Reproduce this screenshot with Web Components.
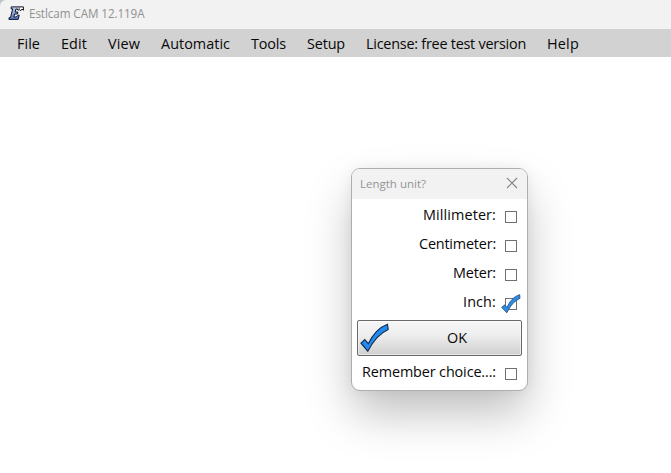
<!DOCTYPE html>
<html lang="en">
<head>
<meta charset="utf-8">
<title>Estlcam CAM</title>
<style>
html,body{margin:0;height:100%;overflow:hidden;background:#fff}
body{font-family:"Open Sans","Noto Sans",sans-serif;color:#111}
</style>
</head>
<body>
<cam-window>
  <cam-titlebar slot="title"><fit-text w="115.5">Estlcam CAM 12.119A</fit-text></cam-titlebar>
  <cam-menubar slot="menu">
    <fit-text w="23">File</fit-text><fit-text w="26">Edit</fit-text><fit-text w="32">View</fit-text><fit-text w="69">Automatic</fit-text><fit-text w="35">Tools</fit-text><fit-text w="38">Setup</fit-text><fit-text w="160">License: free test version</fit-text><fit-text w="32">Help</fit-text>
  </cam-menubar>
  <unit-dialog>
    <fit-text slot="title" w="66">Length unit?</fit-text>
    <option-row><fit-text w="73">Millimeter:</fit-text></option-row>
    <option-row><fit-text w="77">Centimeter:</fit-text></option-row>
    <option-row><fit-text w="43">Meter:</fit-text></option-row>
    <option-row checked><fit-text w="33">Inch:</fit-text></option-row>
    <ok-button><fit-text w="20">OK</fit-text></ok-button>
    <option-row><fit-text w="134">Remember choice...:</fit-text></option-row>
  </unit-dialog>
</cam-window>
<script>
function define(name, html, setup) {
  customElements.define(name, class extends HTMLElement {
    constructor() {
      super();
      this.attachShadow({mode: 'open'}).innerHTML = html;
    }
    connectedCallback() { if (setup) setup(this); }
  });
}

define('cam-window', `
<style>
:host{display:grid;grid-template-rows:29px 28px 1fr;height:100vh;background:linear-gradient(#b9c3c9,#b9c3c9) 0 0/8px 8px no-repeat #fff}
main{display:grid;justify-content:start;align-content:start;padding:111px 0 0 351px}
</style>
<slot name="title"></slot><slot name="menu"></slot><main><slot></slot></main>`);

define('cam-titlebar', `
<style>
:host{display:flex;align-items:center;gap:5px;padding:0 0 3px 8px;box-sizing:border-box;border-top-left-radius:6px;background:#f2f2f2;color:#919191;font-size:11.7px;line-height:16px}
svg{flex:none;display:block}
</style>
<svg width="16" height="16" viewBox="0 0 16 16">
<defs><linearGradient id="g" x2="0" y2="1"><stop offset="0" stop-color="#c4d4f4"/><stop offset="1" stop-color="#4f74c8"/></linearGradient></defs>
<path d="M3.2 1.9H11.6L11.4 5H9.7L9.3 4H7.9L7.1 7H9.9L9.5 9H6.6L5.8 12H8.3L10 10.2H11.2L10.2 14.4H.9L1.2 12.6H2.5L4.7 3.8H3Z" fill="url(#g)" stroke="#101626" stroke-width="1"/>
<path d="M11.3 1.9H15.4V5.2L14 4.2 12 6" fill="#fff" stroke="#111" stroke-width="1"/>
</svg><slot></slot>`);

define('cam-menubar', `
<style>
:host{display:flex;align-items:center;gap:21px;box-sizing:border-box;padding:2px 0 0 17px;background:#d2d2d2;color:#080808;font-size:14.4px;line-height:20px}
</style><slot></slot>`);

define('unit-dialog', `
<style>
:host{display:block;box-sizing:border-box;width:177px;height:223px;border:1px solid #aeaeae;border-radius:9px;background:#fff;box-shadow:0 24px 46px -2px rgba(0,0,0,.25),0 0 14px rgba(0,0,0,.06);overflow:hidden}
header{display:flex;align-items:center;justify-content:space-between;box-sizing:border-box;height:30px;padding:0 9px 0 8px;background:#f2f2f2;color:#929292;font-size:11.5px;line-height:16px}
svg{display:block;margin-top:-2px}
main{display:flex;flex-direction:column;padding:3px 5px 0;font-size:14.4px;color:#080808}
</style>
<header><slot name="title"></slot><svg width="12" height="12" viewBox="0 0 12 12"><path d="M1 1L11 11M11 1L1 11" stroke="#858585" stroke-width="1.1"/></svg></header>
<main><slot></slot></main>`);

define('option-row', `
<style>
:host{display:flex;justify-content:flex-end;align-items:center;gap:9px;height:29px;padding-right:5px;line-height:20px}
slot{display:block}
::slotted(*){margin-top:-3px}
i{position:relative;display:block;box-sizing:border-box;width:12px;height:12px;border:1px solid #707070;background:#fff}
svg{display:none;position:absolute;left:-5px;top:-5px}
:host([checked]) svg{display:block}
</style>
<slot></slot><i><svg width="20" height="20" viewBox="0 0 30 30"><path d="M1 20L5.8 16.3 9 20.2C13 11 18.5 4.2 28 1L28.5 6.5C20.5 10 14.5 17 8.7 28.2Z" fill="#308be5" stroke="#17477d" stroke-width="1.2"/></svg></i>`);

define('ok-button', `
<style>
:host{display:grid;grid-template-columns:34px 1fr;align-items:center;box-sizing:border-box;height:36px;margin:2px 0 3px;border:1px solid #686868;border-radius:2px;background:linear-gradient(#f7f7f7,#eee 40%,#d0d0d0);box-shadow:inset 0 0 0 1px rgba(255,255,255,.5);line-height:20px}
svg{display:block;margin-left:2px}
div{display:flex;justify-content:center;padding-left:1px}
</style>
<svg width="30" height="30" viewBox="0 0 30 30"><path d="M1 20.2L4.8 16.5 8.3 20.7C13 11 18.5 4.5 27.5 1.2L28.2 6.5C20.5 10 13.5 17 7.8 28.2Z" fill="#238af3" stroke="#142a46" stroke-width="1.1"/></svg>
<div><slot></slot></div>`);

// Registered last: it measures text with the font size its container hands down.
define('fit-text', `
<style>:host{display:block;flex:none;white-space:nowrap}span{display:inline-block}</style>
<span><slot></slot></span>`, el => {
  const w = +el.getAttribute('w');
  const natural = el.shadowRoot.querySelector('span').getBoundingClientRect().width;
  el.style.letterSpacing = ((w - natural) / el.textContent.length).toFixed(3) + 'px';
  el.style.width = w + 'px';
});
</script>
</body>
</html>
